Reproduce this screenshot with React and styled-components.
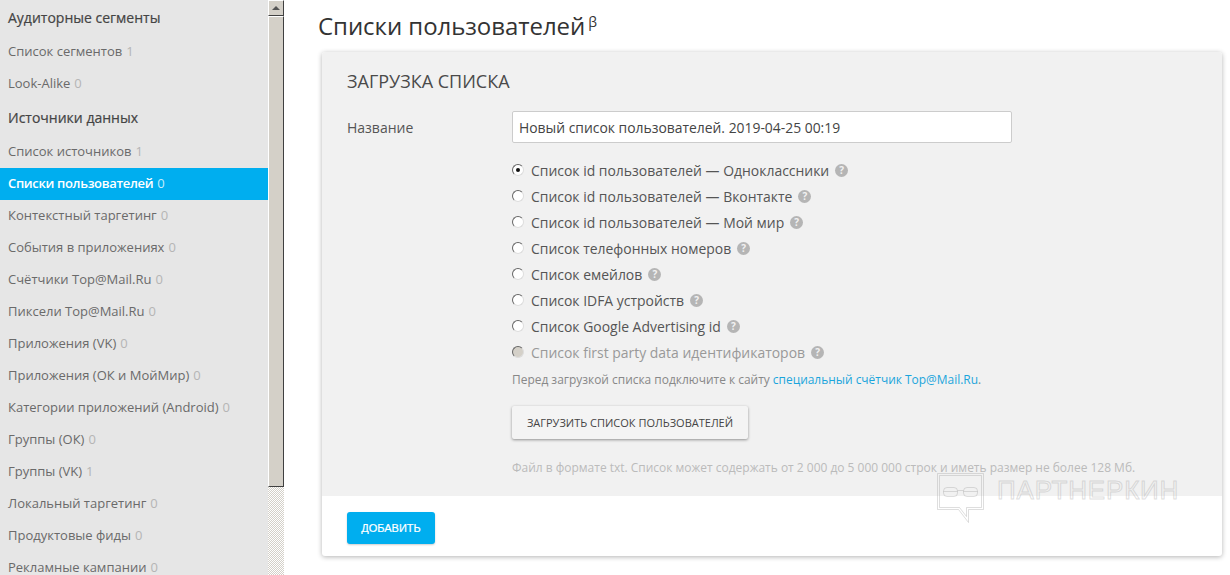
import React from 'react';
import styled, { createGlobalStyle } from 'styled-components';

const GlobalStyle = createGlobalStyle`
  html, body {
    margin: 0;
    padding: 0;
    background: #fff;
    font-family: 'Open Sans', sans-serif;
  }
`;

const Page = styled.div`
  display: flex;
  width: 1230px;
  height: 575px;
  overflow: hidden;
  position: relative;
`;

const Sidebar = styled.nav`
  width: 268px;
  flex: none;
  background: #e6e6e6;
`;

const SideHeading = styled.div`
  height: 36px;
  box-sizing: border-box;
  padding: 0 0 2px 8px;
  display: flex;
  align-items: center;
  font-size: 14px;
  font-weight: 500;
  color: #444;
  -webkit-text-stroke: 0.2px #444;
`;

const SideItem = styled.div`
  height: 32px;
  box-sizing: border-box;
  padding: 0 0 2px 8px;
  display: flex;
  align-items: center;
  gap: 4px;
  font-size: 13px;
  font-weight: ${(p) => (p.$active ? 600 : 400)};
  letter-spacing: ${(p) => (p.$active ? '-0.33px' : '0')};
  color: ${(p) => (p.$active ? '#fff' : '#6a6a6a')};
  background: ${(p) => (p.$active ? '#00aeef' : 'transparent')};
`;

const Count = styled.span`
  font-weight: 400;
  color: ${(p) => (p.$active ? '#c5ecfb' : '#b5b5b5')};
`;

const Scrollbar = styled.div`
  width: 16px;
  flex: none;
  display: flex;
  flex-direction: column;
  background-color: #fff;
  background-image: conic-gradient(#d4d0c8 25%, #fff 0 50%, #d4d0c8 0 75%, #fff 0);
  background-size: 2px 2px;
`;

const ScrollBtn = styled.div`
  width: 16px;
  height: 16px;
  box-sizing: border-box;
  background: #d4d0c8;
  border: 1px solid;
  border-color: #fff #404040 #404040 #fff;
  display: flex;
  align-items: center;
  justify-content: center;
`;

const Arrow = styled.div`
  width: 0;
  height: 0;
  border-left: 4px solid transparent;
  border-right: 4px solid transparent;
  border-bottom: 4px solid #555;
`;

const Thumb = styled.div`
  width: 16px;
  height: 471px;
  box-sizing: border-box;
  background: #d4d0c8;
  border: 1px solid;
  border-color: #fff #404040 #404040 #fff;
`;

const Main = styled.main`
  flex: 1;
  min-width: 0;
  padding: 9px 8px 0 34px;
`;

const Title = styled.h1`
  margin: 0 0 9px;
  height: 34px;
  font-size: 24px;
  line-height: 34px;
  font-weight: 400;
  color: #333;
  letter-spacing: -0.05px;

  sup {
    font-size: 14px;
    line-height: 0;
    margin-left: 3px;
    vertical-align: 8px;
  }
`;

const Card = styled.section`
  margin-left: 4px;
  width: 900px;
  border-radius: 3px;
  background: #fff;
  box-shadow: 0 1px 5px rgba(0, 0, 0, 0.3);
  overflow: hidden;
`;

const CardBody = styled.div`
  height: 444px;
  box-sizing: border-box;
  padding: 18px 25px 0;
  background: #f1f1f1;
`;

const CardTitle = styled.h2`
  margin: 0 0 19px;
  font-size: 18px;
  line-height: 22px;
  font-weight: 400;
  color: #4a4a4a;
  text-transform: uppercase;
`;

const FormRow = styled.div`
  display: grid;
  grid-template-columns: 165px 500px;
  align-items: center;
`;

const Label = styled.label`
  font-size: 14px;
  color: #555;
`;

const TextInput = styled.input`
  height: 32px;
  box-sizing: border-box;
  padding: 0 6px;
  border: 1px solid #ccc;
  border-radius: 2px;
  background: #fff;
  font-family: inherit;
  font-size: 13.9px;
  color: #444;
`;

const Options = styled.div`
  margin: 15px 0 0 165px;
  display: flex;
  flex-direction: column;
`;

const Option = styled.div`
  height: 26px;
  box-sizing: border-box;
  padding-bottom: 2px;
  display: flex;
  align-items: center;
  font-size: 13.95px;
  color: ${(p) => (p.$disabled ? '#999' : '#555')};
`;

const Radio = styled.span`
  width: 12px;
  height: 12px;
  margin: -1px 7px 0 0;
  box-sizing: border-box;
  flex: none;
  border-radius: 50%;
  border: 1px solid;
  border-color: #666 #ddd #ddd #666;
  background: ${(p) => (p.$disabled ? '#d4d0c8' : '#fff')};
  display: flex;
  align-items: center;
  justify-content: center;

  &::after {
    content: '';
    display: ${(p) => (p.$checked ? 'block' : 'none')};
    width: 4px;
    height: 4px;
    border-radius: 50%;
    background: #111;
  }
`;

const Help = styled.span`
  width: 13px;
  height: 13px;
  margin-left: 6px;
  flex: none;
  border-radius: 50%;
  background: #b5b5b5;
  color: #f1f1f1;
  font-size: 10px;
  font-weight: 700;
  line-height: 13px;
  text-align: center;
`;

const Note = styled.p`
  margin: 5px 0 0 165px;
  height: 18px;
  font-size: 11.95px;
  line-height: 18px;
  color: #888;

  a {
    color: #1ba5dc;
    text-decoration: none;
  }
`;

const UploadButton = styled.button`
  display: block;
  margin: 17px 0 0 165px;
  width: 236px;
  height: 33px;
  border: 0;
  border-radius: 2px;
  background: #f4f4f4;
  box-shadow: 0 1px 3px rgba(0, 0, 0, 0.4);
  font-family: inherit;
  font-size: 11px;
  color: #444;
  text-transform: uppercase;
`;

const Hint = styled.p`
  margin: 20px 0 0 165px;
  font-size: 11.98px;
  line-height: 18px;
  color: #bbb;
`;

const CardFooter = styled.div`
  height: 60px;
  padding: 16px 25px 0;
  box-sizing: border-box;
`;

const AddButton = styled.button`
  width: 88px;
  height: 32px;
  border: 0;
  border-radius: 3px;
  background: #00aeef;
  box-shadow: 0 1px 2px rgba(0, 0, 0, 0.2);
  font-family: 'Liberation Sans', sans-serif;
  font-size: 11px;
  font-weight: 400;
  color: #fff;
  text-transform: uppercase;
  -webkit-text-stroke: 0.2px #fff;
`;

const Watermark = styled.div`
  position: absolute;
  left: 937px;
  top: 473px;
  display: flex;
  align-items: flex-start;
  gap: 13px;
  pointer-events: none;
`;

const WatermarkText = styled.span`
  margin-top: 2px;
  font-family: 'Liberation Sans', sans-serif;
  font-size: 26px;
  line-height: 30px;
  letter-spacing: 0.8px;
  color: transparent;
  -webkit-text-stroke: 1px rgba(160, 160, 160, 0.35);
`;

const sideGroups = [
  { title: 'Аудиторные сегменты', items: [['Список сегментов', 1], ['Look-Alike', 0]] },
  {
    title: 'Источники данных',
    items: [
      ['Список источников', 1],
      ['Списки пользователей', 0, true],
      ['Контекстный таргетинг', 0],
      ['События в приложениях', 0],
      ['Счётчики Top@Mail.Ru', 0],
      ['Пиксели Top@Mail.Ru', 0],
      ['Приложения (VK)', 0],
      ['Приложения (ОК и МойМир)', 0],
      ['Категории приложений (Android)', 0],
      ['Группы (ОК)', 0],
      ['Группы (VK)', 1],
      ['Локальный таргетинг', 0],
      ['Продуктовые фиды', 0],
      ['Рекламные кампании', 0],
    ],
  },
];

const listTypes = [
  'Список id пользователей — Одноклассники',
  'Список id пользователей — Вконтакте',
  'Список id пользователей — Мой мир',
  'Список телефонных номеров',
  'Список емейлов',
  'Список IDFA устройств',
  'Список Google Advertising id',
  'Список first party data идентификаторов',
];

const App = () => {
  return (
    <Page>
      <GlobalStyle />
      <Sidebar>
        {sideGroups.map((group) => (
          <React.Fragment key={group.title}>
            <SideHeading>{group.title}</SideHeading>
            {group.items.map(([name, count, active]) => (
              <SideItem key={name} $active={active}>
                {name} <Count $active={active}>{count}</Count>
              </SideItem>
            ))}
          </React.Fragment>
        ))}
      </Sidebar>
      <Scrollbar>
        <ScrollBtn>
          <Arrow />
        </ScrollBtn>
        <Thumb />
      </Scrollbar>
      <Main>
        <Title>
          Списки пользователей<sup>β</sup>
        </Title>
        <Card>
          <CardBody>
            <CardTitle>Загрузка списка</CardTitle>
            <FormRow>
              <Label>Название</Label>
              <TextInput readOnly value="Новый список пользователей. 2019-04-25 00:19" />
            </FormRow>
            <Options>
              {listTypes.map((name, i) => (
                <Option key={name} $disabled={i === 7}>
                  <Radio $checked={i === 0} $disabled={i === 7} />
                  {name}
                  <Help>?</Help>
                </Option>
              ))}
            </Options>
            <Note>
              Перед загрузкой списка подключите к сайту <a href="#top">специальный счётчик Top@Mail.Ru</a>.
            </Note>
            <UploadButton>Загрузить список пользователей</UploadButton>
            <Hint>Файл в формате txt. Список может содержать от 2 000 до 5 000 000 строк и иметь размер не более 128 Мб.</Hint>
          </CardBody>
          <CardFooter>
            <AddButton>Добавить</AddButton>
          </CardFooter>
        </Card>
      </Main>
      <Watermark>
        <svg width="47" height="50" viewBox="0 0 47 50" fill="none" stroke="rgba(160,160,160,0.35)">
          <path d="M.5.5h46v36H31.500v13l-10-13H.5z" />
          <path d="M2.500 2.500h42v32H29.500v9l-7-9H2.500z" />
          <rect x="6.500" y="14.500" width="14" height="9" rx="3.500" />
          <rect x="26.500" y="14.500" width="14" height="9" rx="3.500" />
          <path d="M20.500 17.500h6M6.500 18.500h14M26.500 18.500h14" />
        </svg>
        <WatermarkText>ПАРТНЕРКИН</WatermarkText>
      </Watermark>
    </Page>
  );
};

export default App;
